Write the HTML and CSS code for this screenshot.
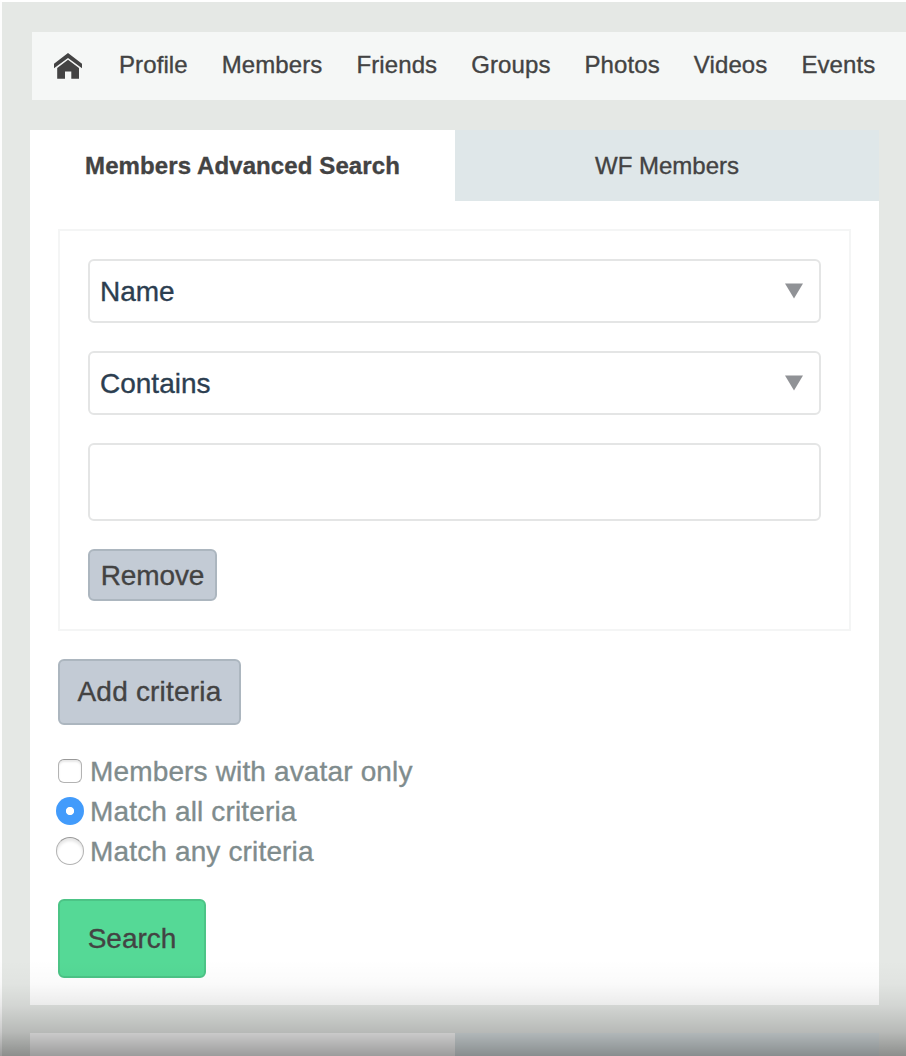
FILE: index.html
```html
<!DOCTYPE html>
<html lang="en">
<head>
<meta charset="utf-8">
<title>Members Advanced Search</title>
<link rel="stylesheet" href="styles.css">
</head>
<body>
<div class="page">
  <nav class="nav">
    <a class="home" aria-label="Home"><svg width="28" height="26" viewBox="0 0 28 26" fill="#434343"><path d="M14 0 28 10.700V15.200L14 5.100 0 15.200V10.700Z"/><path d="M14 6.800 25 15V25.700H17.300V18.500H11V25.700H3.200V15Z"/></svg></a>
    <a class="link">Profile</a>
    <a class="link">Members</a>
    <a class="link">Friends</a>
    <a class="link">Groups</a>
    <a class="link">Photos</a>
    <a class="link">Videos</a>
    <a class="link">Events</a>
  </nav>
  <main class="panel">
    <div class="tabs">
      <a class="tab active">Members Advanced Search</a>
      <a class="tab">WF Members</a>
    </div>
    <form class="form">
      <div class="criteria">
        <div class="select"><span>Name</span><svg width="18" height="16" viewBox="0 0 18 16"><path d="M0 .5H18L9 15.500Z" fill="#909296"/></svg></div>
        <div class="select"><span>Contains</span><svg width="18" height="16" viewBox="0 0 18 16"><path d="M0 .5H18L9 15.500Z" fill="#909296"/></svg></div>
        <input class="text" type="text" aria-label="Value">
        <button class="button remove" type="button">Remove</button>
      </div>
      <button class="button add" type="button">Add criteria</button>
      <div class="options">
        <label class="option"><i class="check"></i><span>Members with avatar only</span></label>
        <label class="option"><i class="radio on"></i><span>Match all criteria</span></label>
        <label class="option"><i class="radio"></i><span>Match any criteria</span></label>
      </div>
      <button class="button search" type="button">Search</button>
    </form>
  </main>
  <section class="panel next">
    <div class="tabs"><span class="tab active"></span><span class="tab"></span></div>
  </section>
</div>
<div class="fade"></div>
</body>
</html>
```
FILE: styles.css
```css
* { box-sizing: border-box; }
body {
  margin: 0;
  height: 1056px;
  overflow: hidden;
  position: relative;
  background: #fff;
  font-family: "Liberation Sans", Arial, sans-serif;
  font-size: 28px;
  color: #434343;
  -webkit-text-stroke: .35px currentColor;
}
.page {
  height: 1056px;
  border-top: 2px solid #fff;
  border-left: 2px solid #fdfdfd;
  background: #e5e8e5;
  padding: 30px 0 0 28px;
  overflow: hidden;
}
.nav {
  height: 68px;
  margin-left: 2px;
  padding-left: 22px;
  background: #f5f7f6;
  display: flex;
  align-items: center;
  gap: 34px;
  font-size: 24px;
  letter-spacing: .1px;
  white-space: nowrap;
}
.home { display: flex; margin-right: 3px; }
.link { padding-bottom: 3px; }
.panel {
  width: 849px;
  height: 875px;
  margin-top: 30px;
  background: #fff;
}
.next { margin-top: 28px; }
.tabs { display: flex; height: 71px; }
.tab {
  width: 424px;
  background: #dfe7e9;
  font-size: 24px;
  display: flex;
  align-items: center;
  justify-content: center;
}
.tab.active { width: 425px; background: #fff; font-weight: bold; letter-spacing: .1px; }
.form {
  padding: 28px;
  display: flex;
  flex-direction: column;
  align-items: flex-start;
}
.criteria {
  width: 793px;
  height: 402px;
  border: 2px solid #f4f5f5;
  padding: 28px;
  display: flex;
  flex-direction: column;
  align-items: flex-start;
  gap: 28px;
}
.select, .text {
  width: 733px;
  border: 2px solid #e4e5e5;
  border-radius: 6px;
  background: #fff;
}
.select {
  height: 64px;
  padding: 0 16px 0 10px;
  display: flex;
  align-items: center;
  justify-content: space-between;
  color: #2c3e50;
}
.select span { padding-top: 2px; }
.text { height: 78px; padding: 0 10px; font: inherit; }
.button {
  border: 2px solid #acb6bf;
  border-radius: 6px;
  padding: 0;
  background: #c3cbd5;
  color: #434343;
  font: inherit;
  -webkit-text-stroke: .35px currentColor;
}
.remove { width: 129px; height: 52px; padding-top: 2px; letter-spacing: -.1px; }
.add { width: 183px; height: 66px; margin-top: 28px; letter-spacing: .2px; }
.options {
  margin-top: 26px;
  color: #7f8c8d;
}
.option {
  height: 40px;
  margin-left: -2px;
  display: flex;
  align-items: center;
  gap: 6px;
  letter-spacing: .15px;
}
.option span { padding-top: 1px; }
.check {
  width: 24px;
  height: 24px;
  margin: 0 2px;
  border: 1px solid #b3b3b3;
  border-top-color: #999;
  border-radius: 6px;
  background: #fff;
  box-shadow: inset 0 2px 2px #e8e8e8;
}
.radio {
  width: 28px;
  height: 28px;
  border: 1px solid #b3b3b3;
  border-top-color: #999;
  border-radius: 50%;
  background: #fff;
  box-shadow: inset 0 3px 3px #e6e6e6;
}
.radio.on {
  border: 0;
  background: radial-gradient(circle at 50% 50%, #fff 3.700px, #429bfb 4.500px);
  box-shadow: none;
}
.search {
  width: 148px;
  height: 79px;
  margin-top: 28px;
  border-color: #4cc486;
  background: #55d996;
}
/* Shadow that darkens the lower edge of the viewport */
.fade {
  position: absolute;
  inset: auto 0 0 0;
  height: 96px;
  background: linear-gradient(rgba(0,0,0,0), rgba(0,0,0,.02) 25%, rgba(0,0,0,.08) 47%, rgba(0,0,0,.2) 75%, rgba(0,0,0,.39));
}
```
